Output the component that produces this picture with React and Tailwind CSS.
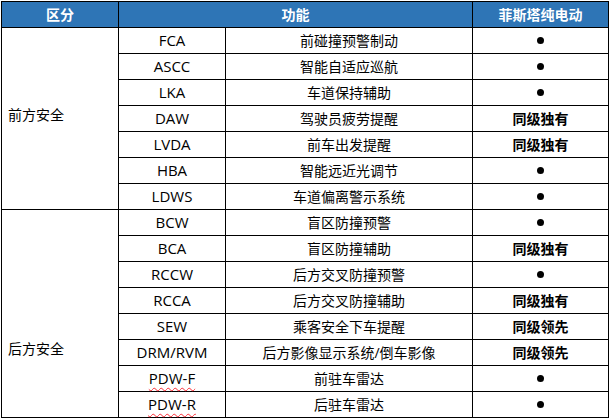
const front = [
  ["FCA", "前碰撞预警制动", "●"],
  ["ASCC", "智能自适应巡航", "●"],
  ["LKA", "车道保持辅助", "●"],
  ["DAW", "驾驶员疲劳提醒", "同级独有"],
  ["LVDA", "前车出发提醒", "同级独有"],
  ["HBA", "智能远近光调节", "●"],
  ["LDWS", "车道偏离警示系统", "●"],
];

const rear = [
  ["BCW", "盲区防撞预警", "●"],
  ["BCA", "盲区防撞辅助", "同级独有"],
  ["RCCW", "后方交叉防撞预警", "●"],
  ["RCCA", "后方交叉防撞辅助", "同级独有"],
  ["SEW", "乘客安全下车提醒", "同级领先"],
  ["DRM/RVM", "后方影像显示系统/倒车影像", "同级领先"],
  ["PDW-F", "前驻车雷达", "●", true],
  ["PDW-R", "后驻车雷达", "●", true],
];

function Rows({ rows }) {
  return rows.map(([code, name, value, typo]) => (
    <div key={code} className="contents">
      <div className="flex items-center justify-center bg-white text-[15px]">
        <span className={typo ? "underline decoration-wavy decoration-red-500 decoration-1 underline-offset-[3px]" : ""}>{code}</span>
      </div>
      <div className="flex items-center justify-center bg-white">{name}</div>
      <div className="flex items-center justify-center bg-white font-bold">
        {value === "●" ? <span className="h-[7px] w-[7px] rounded-full bg-black" /> : value}
      </div>
    </div>
  ));
}

export default function App() {
  return (
    <div className="h-[420px] w-[611px] bg-white pl-[1px] pt-[1px]">
      <div
        className="grid w-[608px] grid-cols-[116px_106px_246px_135px] grid-rows-[repeat(16,25px)] gap-[1px] bg-black p-[1px] text-[14px] leading-none text-black"
        style={{ fontFamily: '"Open Sans", "Noto Sans CJK SC", sans-serif' }}
      >
        <div className="flex items-center justify-center bg-[#2e75b6] font-bold text-white">区分</div>
        <div className="col-span-2 flex items-center justify-center bg-[#2e75b6] font-bold text-white">功能</div>
        <div className="flex items-center justify-center bg-[#2e75b6] font-bold text-white">菲斯塔纯电动</div>

        <div className="row-span-7 bg-white pl-[6px] pt-[80px]">前方安全</div>
        <Rows rows={front} />

        <div className="row-span-8 bg-white pl-[6px] pt-[132px]">后方安全</div>
        <Rows rows={rear} />
      </div>
    </div>
  );
}
